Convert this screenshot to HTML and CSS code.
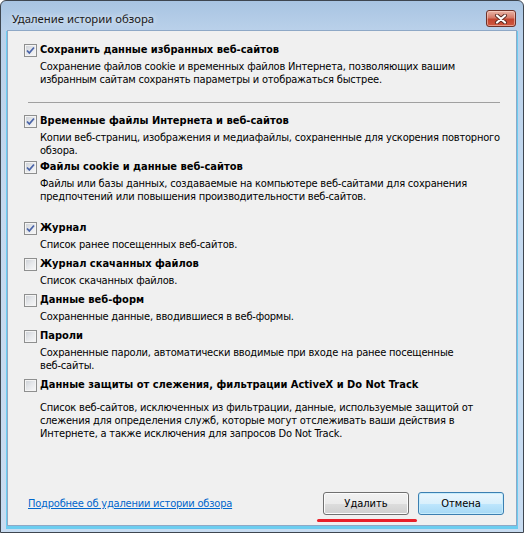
FILE: index.html
```html
<!DOCTYPE html>
<html lang="ru">
<head>
    <meta charset="UTF-8">
    <title>Удаление истории обзора</title>
    <link rel="stylesheet" href="styles.css">
</head>
<body>

<div class="window">
    <div class="titlebar">
        <span class="title">Удаление истории обзора</span>
        <div class="close">
            <svg width="14" height="10" viewBox="0 0 14 10">
                <path d="M3 1.5 L11 8.5 M11 1.5 L3 8.5" stroke="#5a2a22" stroke-width="4" stroke-linecap="round"/>
                <path d="M3 1.5 L11 8.5 M11 1.5 L3 8.5" stroke="#ffffff" stroke-width="2.2" stroke-linecap="round"/>
            </svg>
        </div>
    </div>

    <div class="panel">
        <div class="options">
            <div class="item">
                <div class="opt"><span class="cb checked"><svg width="11" height="11" viewBox="0 0 11 11"><path d="M2 5.5 L4.3 8 L9 2.5" fill="none" stroke="#4a64a8" stroke-width="1.8"/></svg></span>Сохранить данные избранных веб-сайтов</div>
                <p class="desc">Сохранение файлов cookie и временных файлов Интернета, позволяющих вашим<br>избранным сайтам сохранять параметры и отображаться быстрее.</p>
            </div>

            <div class="sep"></div>

            <div class="item item-first">
                <div class="opt"><span class="cb checked"><svg width="11" height="11" viewBox="0 0 11 11"><path d="M2 5.5 L4.3 8 L9 2.5" fill="none" stroke="#4a64a8" stroke-width="1.8"/></svg></span>Временные файлы Интернета и веб-сайтов</div>
                <p class="desc">Копии веб-страниц, изображения и медиафайлы, сохраненные для ускорения повторного<br>обзора.</p>
            </div>

            <div class="item item-tight">
                <div class="opt"><span class="cb checked"><svg width="11" height="11" viewBox="0 0 11 11"><path d="M2 5.5 L4.3 8 L9 2.5" fill="none" stroke="#4a64a8" stroke-width="1.8"/></svg></span>Файлы cookie и данные веб-сайтов</div>
                <p class="desc">Файлы или базы данных, создаваемые на компьютере веб-сайтами для сохранения<br>предпочтений или повышения производительности веб-сайтов.</p>
            </div>

            <div class="item item-spaced">
                <div class="opt"><span class="cb checked"><svg width="11" height="11" viewBox="0 0 11 11"><path d="M2 5.5 L4.3 8 L9 2.5" fill="none" stroke="#4a64a8" stroke-width="1.8"/></svg></span>Журнал</div>
                <p class="desc">Список ранее посещенных веб-сайтов.</p>
            </div>

            <div class="item">
                <div class="opt"><span class="cb"></span>Журнал скачанных файлов</div>
                <p class="desc">Список скачанных файлов.</p>
            </div>

            <div class="item">
                <div class="opt"><span class="cb"></span>Данные веб-форм</div>
                <p class="desc">Сохраненные данные, вводившиеся в веб-формы.</p>
            </div>

            <div class="item">
                <div class="opt"><span class="cb"></span>Пароли</div>
                <p class="desc">Сохраненные пароли, автоматически вводимые при входе на ранее посещенные<br>веб-сайты.</p>
            </div>

            <div class="item">
                <div class="opt"><span class="cb"></span>Данные защиты от слежения, фильтрации ActiveX и Do Not Track</div>
                <p class="desc desc-far">Список веб-сайтов, исключенных из фильтрации, данные, используемые защитой от<br>слежения для определения служб, которые могут отслеживать ваши действия в<br>Интернете, а также исключения для запросов Do Not Track.</p>
            </div>
        </div>

        <div class="footer">
            <a class="more" href="#">Подробнее об удалении истории обзора</a>
            <div class="buttons">
                <button class="btn btn-delete">Удалить<span class="mark"></span></button>
                <button class="btn btn-default">Отмена</button>
            </div>
        </div>
    </div>
</div>

</body>
</html>
```

FILE: styles.css
```css
body {
    margin: 0;
    background: #ffffff;
}

.window {
    width: 524px;
    height: 533px;
    box-sizing: border-box;
    border: 1px solid #3e4650;
    border-radius: 6px 6px 0 0;
    padding: 0 6px 6px 6px;
    display: flex;
    flex-direction: column;
    background: linear-gradient(180deg, #a8c4e2 0, #bad1ea 30px, #c4d9ef 200px, #c8dcf1 100%);
}

.titlebar {
    height: 29px;
    display: flex;
    align-items: center;
    justify-content: space-between;
}

.title {
    margin-left: 5px;
    margin-top: 6px;
    font-family: "Noto Sans", sans-serif;
    font-size: 11.3px;
    color: #1a1a1a;
    text-shadow: 0 0 6px #ffffff;
}

.close {
    width: 30px;
    height: 17px;
    margin-top: 6px;
    margin-right: 1px;
    box-sizing: border-box;
    border: 1px solid #6e3128;
    border-radius: 3px;
    display: flex;
    align-items: center;
    justify-content: center;
    background: linear-gradient(180deg, #eab4a6 0, #d47a68 45%, #c2442f 55%, #d0583f 100%);
    box-shadow: inset 0 0 0 1px rgba(255, 220, 210, 0.5);
}

.panel {
    flex: 1;
    display: flex;
    flex-direction: column;
    border: 1px solid #8ea8c6;
    background: #f0f0f0;
    box-shadow: 0 2px 0 1px #6ccdf0;
    font-family: "DejaVu Sans Condensed", "DejaVu Sans", sans-serif;
    font-size: 11px;
    color: #000000;
}

.options {
    padding: 6px 0 0 16px;
}

.item {
    margin-top: 5px;
}

.item-first {
    margin-top: 10px;
}

.item-tight {
    margin-top: 2px;
}

.item-spaced {
    margin-top: 17px;
}

.opt {
    display: flex;
    align-items: center;
    line-height: 16px;
    font-weight: bold;
    white-space: nowrap;
}

.cb {
    width: 13px;
    height: 13px;
    box-sizing: border-box;
    margin-right: 3px;
    border: 1px solid #8e8f8f;
    background: linear-gradient(135deg, #cbcfd5 0, #e6e8eb 50%, #f8f8f8 100%);
    box-shadow: inset 0 0 0 1px #f4f4f4;
    display: flex;
}

.desc {
    margin: 2px 0 0 16px;
    line-height: 13px;
    letter-spacing: -0.2px;
    white-space: nowrap;
}

.desc-far {
    margin-top: 8px;
}

.sep {
    margin: 16px 0 0 4px;
    width: 472px;
    height: 1px;
    background: #a0a0a0;
}

.footer {
    margin-top: auto;
    padding: 0 12px 10px 20px;
    display: flex;
    align-items: center;
    justify-content: space-between;
}

.more {
    color: #0066cc;
    letter-spacing: -0.2px;
    text-decoration: underline;
}

.buttons {
    display: flex;
    gap: 9px;
}

.btn {
    position: relative;
    width: 86px;
    height: 23px;
    padding: 0;
    border: 1px solid #707070;
    border-radius: 3px;
    font-family: "DejaVu Sans Condensed", "DejaVu Sans", sans-serif;
    font-size: 11px;
    color: #000000;
    background: linear-gradient(180deg, #f2f2f2 0, #ebebeb 50%, #dddddd 51%, #cfcfcf 100%);
    box-shadow: inset 0 0 0 1px #fcfcfc;
}

.btn-default {
    border-color: #3c7fb1;
    background: linear-gradient(180deg, #eaf6fd 0, #d9f0fc 50%, #bee6fd 51%, #a7d9f5 100%);
    box-shadow: inset 0 0 0 1px #c6ecfc;
}

.mark {
    position: absolute;
    left: -7px;
    top: calc(100% + 5px);
    width: 100px;
    height: 3px;
    border-radius: 2px;
    background: #e8202a;
}
```
